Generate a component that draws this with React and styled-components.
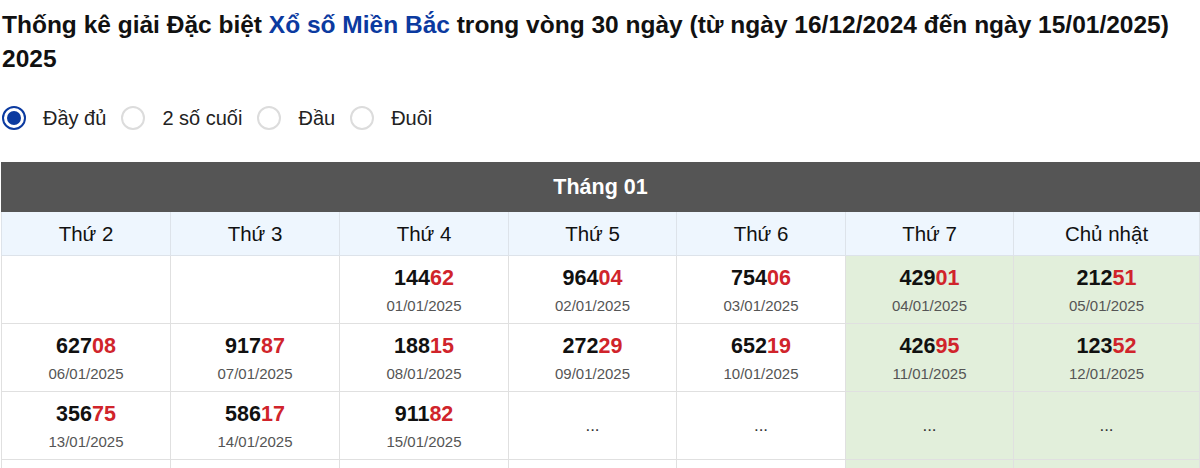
import React from 'react';
import styled, { createGlobalStyle } from 'styled-components';

const GlobalStyle = createGlobalStyle`
    body {
        margin: 0;
        background: #fff;
        font-family: Arial, "Liberation Sans", sans-serif;
        color: #111;
    }
`;

const Page = styled.div`
    padding: 0 1px;
    width: 1198px;
`;

const Title = styled.h2`
    margin: 0;
    padding: 8px 1px 0;
    max-width: 1190px;
    font-size: 24.5px;
    font-weight: bold;
    line-height: 34px;
    color: #111;
`;

const Highlight = styled.span`
    color: #0b3aa0;
`;

const RadioBar = styled.div`
    display: flex;
    flex-direction: row;
    align-items: center;
    margin-top: 27px;
    height: 30px;
`;

const RadioItem = styled.label`
    display: flex;
    align-items: center;
    font-size: 20px;
    color: #222;
    margin-right: 14px;
`;

const RadioCircle = styled.span`
    box-sizing: border-box;
    width: 24px;
    height: 24px;
    border-radius: 50%;
    margin-left: 1px;
    margin-right: 17px;
    border: 2px solid ${props => props.checked ? '#0b3aa0' : '#dcdcdc'};
    display: flex;
    align-items: center;
    justify-content: center;
    &::after {
        content: '';
        display: ${props => props.checked ? 'block' : 'none'};
        width: 14px;
        height: 14px;
        border-radius: 50%;
        background: #0b3aa0;
    }
`;

const Table = styled.table`
    margin-top: 29px;
    width: 1198px;
    border-collapse: collapse;
    table-layout: fixed;
`;

const Col = styled.col`
    width: ${props => props.width}px;
`;

const MonthCell = styled.th`
    background: #555;
    color: #fff;
    font-size: 21.5px;
    font-weight: bold;
    height: 48px;
    padding: 0;
    border: 1px solid #555;
`;

const DayCell = styled.th`
    background: #eef6fe;
    font-size: 20.5px;
    font-weight: normal;
    color: #111;
    height: 43px;
    padding: 0;
    border: 1px solid #dde3ea;
`;

const Cell = styled.td`
    background: ${props => props.weekend ? '#e2efdb' : '#fff'};
    border: 1px solid #e0e0e0;
    height: 67px;
    padding: 0;
    text-align: center;
    vertical-align: middle;
`;

const Number = styled.div`
    font-size: 21.5px;
    font-weight: bold;
    color: #111;
    line-height: 26px;
`;

const Tail = styled.span`
    color: #d0242b;
`;

const DateText = styled.div`
    font-size: 15px;
    color: #555;
    line-height: 17px;
    margin-top: 6px;
`;

const Dots = styled.div`
    font-size: 17px;
    color: #333;
`;

const days = ['Thứ 2', 'Thứ 3', 'Thứ 4', 'Thứ 5', 'Thứ 6', 'Thứ 7', 'Chủ nhật'];
const widths = [169, 169, 169, 168, 169, 168, 186];

const rows = [
    [null, null, ['14462', '01/01/2025'], ['96404', '02/01/2025'], ['75406', '03/01/2025'], ['42901', '04/01/2025'], ['21251', '05/01/2025']],
    [['62708', '06/01/2025'], ['91787', '07/01/2025'], ['18815', '08/01/2025'], ['27229', '09/01/2025'], ['65219', '10/01/2025'], ['42695', '11/01/2025'], ['12352', '12/01/2025']],
    [['35675', '13/01/2025'], ['58617', '14/01/2025'], ['91182', '15/01/2025'], '...', '...', '...', '...'],
    [null, null, null, null, null, null, null],
];

const DayEntry = ({ item }) => {
    if (!item) return null;
    if (item === '...') return <Dots>...</Dots>;
    const [num, date] = item;
    return <>
        <Number>{num.slice(0, 3)}<Tail>{num.slice(3)}</Tail></Number>
        <DateText>{date}</DateText>
    </>;
};

const options = ['Đầy đủ', '2 số cuối', 'Đầu', 'Đuôi'];

export default function App() {
    return <Page>
        <GlobalStyle />
        <Title>
            Thống kê giải Đặc biệt <Highlight>Xổ số Miền Bắc</Highlight> trong vòng 30 ngày (từ ngày 16/12/2024 đến ngày 15/01/2025) 2025
        </Title>
        <RadioBar>
            {options.map((opt, i) =>
                <RadioItem key={opt}>
                    <RadioCircle checked={i === 0} />
                    {opt}
                </RadioItem>
            )}
        </RadioBar>
        <Table>
            <colgroup>
                {widths.map((w, i) => <Col key={i} width={w} />)}
            </colgroup>
            <thead>
                <tr><MonthCell colSpan={7}>Tháng 01</MonthCell></tr>
                <tr>
                    {days.map(d => <DayCell key={d}>{d}</DayCell>)}
                </tr>
            </thead>
            <tbody>
                {rows.map((row, r) =>
                    <tr key={r}>
                        {row.map((item, c) =>
                            <Cell key={c} weekend={c >= 5}>
                                <DayEntry item={item} />
                            </Cell>
                        )}
                    </tr>
                )}
            </tbody>
        </Table>
    </Page>;
}
